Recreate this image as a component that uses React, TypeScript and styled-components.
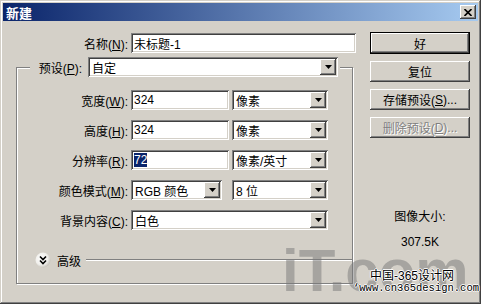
import * as React from 'react';
import styled, { createGlobalStyle } from 'styled-components';

const FONT = `"Liberation Sans", "Noto Sans CJK SC", sans-serif`;

const RAISED = 'inset -1px -1px #404040, inset 1px 1px #fff, inset -2px -2px #808080, inset 2px 2px #d4d0c8';
const SUNKEN = 'inset 1px 1px #808080, inset -1px -1px #fff, inset 2px 2px #404040, inset -2px -2px #d4d0c8';

const GlobalStyle = createGlobalStyle`
    html, body {
        margin: 0;
        padding: 0;
        background: #d4d0c8;
    }
    body {
        font-family: ${FONT};
        font-size: 12px;
        color: #000;
    }
    * {
        box-sizing: border-box;
    }
`;

const Window = styled.div`
    position: relative;
    display: flex;
    flex-direction: column;
    width: 481px;
    height: 304px;
    padding: 3px;
    background: #d4d0c8;
    box-shadow: inset -1px -1px #404040, inset 1px 1px #d4d0c8, inset -2px -2px #808080, inset 2px 2px #fff;
    overflow: hidden;
`;

const TitleBar = styled.div`
    display: flex;
    align-items: center;
    justify-content: space-between;
    height: 18px;
    padding: 0 2px 0 3px;
    background: linear-gradient(to right, #0a246a, #a6caf0);
    color: #fff;
    font-weight: bold;
    font-size: 13px;
`;

const CloseButton = styled.div`
    display: flex;
    align-items: center;
    justify-content: center;
    width: 16px;
    height: 14px;
    background: #d4d0c8;
    box-shadow: ${RAISED};
`;

const Body = styled.div`
    display: flex;
    flex: 1;
    padding: 12px 0 0 13px;
`;

const MainColumn = styled.div`
    display: flex;
    flex-direction: column;
    width: 342px;
`;

const SideColumn = styled.div`
    display: flex;
    flex-direction: column;
    gap: 7px;
    width: 100px;
    margin: -1px 0 0 12px;
`;

const Row = styled.div`
    display: flex;
    align-items: center;
    height: 20px;
`;

const Label = styled.span<{ $width: number }>`
    width: ${(p) => p.$width}px;
    margin-right: 3px;
    text-align: right;
    white-space: nowrap;
`;

const TextBox = styled.div<{ $width: number }>`
    display: flex;
    align-items: center;
    width: ${(p) => p.$width}px;
    height: 20px;
    padding: 2px 2px 2px 3px;
    background: #fff;
    box-shadow: ${SUNKEN};
    white-space: nowrap;
`;

const Selected = styled.span`
    background: #0a246a;
    color: #fff;
`;

const SelectBox = styled.div<{ $width: number; $gapLeft?: number }>`
    display: flex;
    align-items: stretch;
    width: ${(p) => p.$width}px;
    height: 20px;
    margin-left: ${(p) => p.$gapLeft || 0}px;
    padding: 2px;
    background: #fff;
    box-shadow: ${SUNKEN};
`;

const SelectText = styled.span`
    flex: 1;
    display: flex;
    align-items: center;
    padding-left: 2px;
    white-space: nowrap;
`;

const DropButton = styled.span`
    display: flex;
    align-items: center;
    justify-content: center;
    width: 16px;
    background: #d4d0c8;
    box-shadow: ${RAISED};
`;

const Group = styled.fieldset`
    width: 337px;
    margin: 4px 0 0;
    padding: 0 0 15px;
    min-inline-size: 0;
    border: 1px solid #808080;
    box-shadow: inset 1px 1px #fff, 1px 1px #fff;
`;

const Legend = styled.legend`
    margin-left: 13px;
    padding: 0 2px 0 3px;
    background: #d4d0c8;
`;

const LegendInner = styled.div`
    display: flex;
    align-items: center;
`;

const GroupRows = styled.div`
    display: flex;
    flex-direction: column;
    gap: 10px;
    padding-top: 13px;
`;

const AdvancedRow = styled.div`
    display: flex;
    align-items: center;
    height: 16px;
    margin-top: 22px;
    padding-left: 18px;
`;

const AdvancedText = styled.span`
    margin: 0 5px 0 6px;
`;

const EtchedLine = styled.div`
    flex: 1;
    height: 2px;
    border-top: 1px solid #808080;
    border-bottom: 1px solid #fff;
`;

const Button = styled.div<{ $primary?: boolean; $disabled?: boolean }>`
    display: flex;
    align-items: center;
    justify-content: center;
    height: ${(p) => (p.$primary ? 22 : 21)}px;
    background: #d4d0c8;
    border: ${(p) => (p.$primary ? '1px solid #000' : 'none')};
    box-shadow: ${RAISED};
    color: ${(p) => (p.$disabled ? '#808080' : '#000')};
    text-shadow: ${(p) => (p.$disabled ? '1px 1px 0 #fff' : 'none')};
`;

const SizeInfo = styled.div`
    display: flex;
    flex-direction: column;
    align-items: center;
    gap: 13px;
    margin-top: 66px;
    line-height: 12px;
`;

const WatermarkLogo = styled.div`
    position: absolute;
    left: 282px;
    top: 241px;
    font-family: "Liberation Sans", sans-serif;
    font-weight: bold;
    font-size: 60px;
    line-height: 60px;
    color: rgba(120, 120, 120, 0.5);
    pointer-events: none;
`;

const WatermarkName = styled.div`
    position: absolute;
    left: 370px;
    top: 270px;
    font-size: 12px;
    line-height: 13px;
    color: #000;
    text-shadow: 1px 0 #fff, -1px 0 #fff, 0 1px #fff, 0 -1px #fff;
`;

const WatermarkUrl = styled.div`
    position: absolute;
    left: 353px;
    top: 283px;
    font-family: "Liberation Mono", monospace;
    font-size: 10.5px;
    line-height: 11px;
    color: #000;
    text-shadow: 1px 0 #fff, -1px 0 #fff, 0 1px #fff, 0 -1px #fff;
`;

const Arrow = () => (
    <svg width="7" height="4" viewBox="0 0 7 4">
        <path d="M0 0 H7 L3.5 4 Z" fill="#000" />
    </svg>
);

const Select = ({ width, gapLeft, children }: { width: number; gapLeft?: number; children?: React.ReactNode }) => (
    <SelectBox $width={width} $gapLeft={gapLeft}>
        <SelectText>{children}</SelectText>
        <DropButton><Arrow /></DropButton>
    </SelectBox>
);

const ExpandIcon = () => (
    <svg width="16" height="16" viewBox="0 0 16 16">
        <defs>
            <radialGradient id="adv" cx="0.4" cy="0.4" r="0.7">
                <stop offset="0" stopColor="#ffffff" />
                <stop offset="0.6" stopColor="#f0efeb" />
                <stop offset="1" stopColor="#b8b4ac" />
            </radialGradient>
        </defs>
        <circle cx="8" cy="8" r="7.5" fill="url(#adv)" />
        <path d="M5 4.5 L8 7.5 L11 4.5 M5 8.5 L8 11.5 L11 8.5" fill="none" stroke="#000" strokeWidth="1.6" />
    </svg>
);

const LABEL_W = 111;

const App = () => (
    <Window>
        <GlobalStyle />
        <TitleBar>
            新建
            <CloseButton>
                <svg width="8" height="7" viewBox="0 0 8 7">
                    <path d="M0.5 0 L7.5 7 M7.5 0 L0.5 7" stroke="#000" strokeWidth="1.6" />
                </svg>
            </CloseButton>
        </TitleBar>
        <Body>
            <MainColumn>
                <Row>
                    <Label $width={112}>名称(<u>N</u>):</Label>
                    <TextBox $width={225}>未标题-1</TextBox>
                </Row>
                <Group>
                    <Legend>
                        <LegendInner>
                            <Label $width={49}>预设(<u>P</u>):</Label>
                            <Select width={250} gapLeft={3}>自定</Select>
                        </LegendInner>
                    </Legend>
                    <GroupRows>
                        <Row>
                            <Label $width={LABEL_W}>宽度(<u>W</u>):</Label>
                            <TextBox $width={98}>324</TextBox>
                            <Select width={96} gapLeft={3}>像素</Select>
                        </Row>
                        <Row>
                            <Label $width={LABEL_W}>高度(<u>H</u>):</Label>
                            <TextBox $width={98}>324</TextBox>
                            <Select width={96} gapLeft={3}>像素</Select>
                        </Row>
                        <Row>
                            <Label $width={LABEL_W}>分辨率(<u>R</u>):</Label>
                            <TextBox $width={98}><Selected>72</Selected></TextBox>
                            <Select width={96} gapLeft={3}>像素/英寸</Select>
                        </Row>
                        <Row>
                            <Label $width={LABEL_W}>颜色模式(<u>M</u>):</Label>
                            <Select width={91}>RGB 颜色</Select>
                            <Select width={96} gapLeft={10}>8 位</Select>
                        </Row>
                        <Row>
                            <Label $width={LABEL_W}>背景内容(<u>C</u>):</Label>
                            <Select width={197}>白色</Select>
                        </Row>
                    </GroupRows>
                    <AdvancedRow>
                        <ExpandIcon />
                        <AdvancedText>高级</AdvancedText>
                        <EtchedLine />
                    </AdvancedRow>
                </Group>
            </MainColumn>
            <SideColumn>
                <Button $primary>好</Button>
                <Button>复位</Button>
                <Button>存储预设(<u>S</u>)...</Button>
                <Button $disabled>删除预设(<u>D</u>)...</Button>
                <SizeInfo>
                    <span>图像大小:</span>
                    <span>307.5K</span>
                </SizeInfo>
            </SideColumn>
        </Body>
        <WatermarkLogo>iT.com</WatermarkLogo>
        <WatermarkName>中国-365设计网</WatermarkName>
        <WatermarkUrl>‘www.cn365design.com</WatermarkUrl>
    </Window>
);

export default App;
